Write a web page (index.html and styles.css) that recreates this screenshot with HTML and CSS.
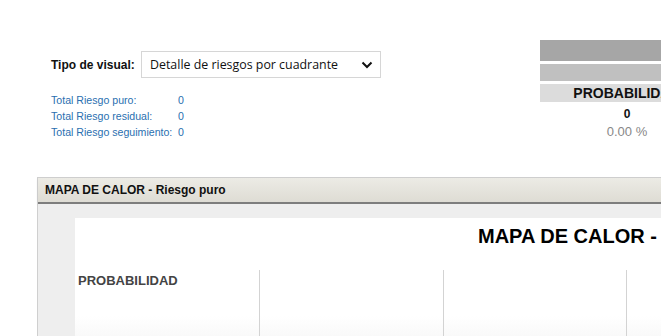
FILE: index.html
```html
<!DOCTYPE html>
<html lang="es">
<head>
<meta charset="UTF-8">
<meta name="viewport" content="width=device-width, initial-scale=1.0">
<title>Mapa de calor</title>
<link rel="stylesheet" href="styles.css">
</head>
<body>
    <div class="top">
        <div class="filters">
            <div class="visual-row">
                <label class="visual-label" for="tipoVisual">Tipo de visual:</label>
                <div class="select">
                    <span>Detalle de riesgos por cuadrante</span>
                    <svg width="12" height="8" viewBox="0 0 12 8"><path d="M1.5 1.5 6 6l4.5-4.5" fill="none" stroke="#111" stroke-width="2"/></svg>
                </div>
            </div>
            <table class="totals">
                <tr><td>Total Riesgo puro:</td><td>0</td></tr>
                <tr><td>Total Riesgo residual:</td><td>0</td></tr>
                <tr><td>Total Riesgo seguimiento:</td><td>0</td></tr>
            </table>
        </div>
        <div class="summary">
            <div class="bar dark"></div>
            <div class="bar light"></div>
            <div class="bar head">PROBABILIDAD</div>
            <div class="count">0</div>
            <div class="percent">0.00 %</div>
        </div>
    </div>

    <div class="panel">
        <div class="panel-title">MAPA DE CALOR - Riesgo puro</div>
        <div class="panel-body">
            <div class="map">
                <h2>MAPA DE CALOR - Riesgo puro</h2>
                <div class="grid">
                    <div class="cell label">PROBABILIDAD</div>
                    <div class="cell"></div>
                    <div class="cell"></div>
                    <div class="cell"></div>
                    <div class="cell"></div>
                </div>
            </div>
        </div>
    </div>
</body>
</html>
```

FILE: styles.css
```css
body {
    margin: 0;
    font-family: "Liberation Sans", Arial, sans-serif;
    background-color: white;
    overflow: hidden;
    width: 661px;
    height: 336px;
}
.top {
    display: flex;
    height: 177px;
}
.filters {
    width: 540px;
    padding: 51px 0 0 51px;
    box-sizing: border-box;
    flex-shrink: 0;
}
.visual-row {
    display: flex;
    align-items: center;
}
.visual-label {
    font-size: 12px;
    font-weight: bold;
    color: #111;
    width: 90px;
}
.select {
    width: 240px;
    height: 27px;
    border: 1px solid #d6d6d6;
    display: flex;
    align-items: center;
    justify-content: space-between;
    padding: 0 7px 0 8px;
    box-sizing: border-box;
    font-family: "Open Sans", "Noto Sans", sans-serif;
    font-size: 12.4px;
    color: #111;
}
.totals {
    margin-top: 14px;
    border-collapse: collapse;
    font-size: 10.6px;
    color: #2a6fb0;
}
.totals td {
    padding: 0;
    height: 16px;
    white-space: nowrap;
}
.totals td:first-child {
    width: 127px;
}
.summary {
    width: 174px;
    flex-shrink: 0;
    padding-top: 40px;
    text-align: center;
}
.bar {
    margin-bottom: 3px;
}
.dark {
    height: 21px;
    background-color: #a6a6a6;
}
.light {
    height: 17px;
    background-color: #c0c0c0;
}
.head {
    height: 18px;
    line-height: 19px;
    background-color: #dcdcdc;
    font-size: 14px;
    font-weight: bold;
    color: #111;
    margin-bottom: 4px;
}
.count {
    font-size: 12px;
    font-weight: bold;
    color: #111;
    line-height: 16px;
}
.percent {
    font-size: 13px;
    color: #888;
    line-height: 20px;
}
.panel {
    margin-left: 37px;
    width: 900px;
    border-left: 1px solid #cfcfcf;
    border-top: 1px solid #cfcfcf;
}
.panel-title {
    height: 24px;
    line-height: 24px;
    padding-left: 7px;
    font-size: 12px;
    font-weight: bold;
    color: #111;
    background: linear-gradient(#ecebe5, #dedcd4);
    border-bottom: 2px solid #7d7d7d;
    box-shadow: 0 1px 2px #c8c8c8;
}
.panel-body {
    background-color: #eeeeee;
    padding: 14px 0 0 37px;
}
.map {
    background-color: white;
    width: 1100px;
    height: 130px;
}
.map h2 {
    margin: 0;
    padding: 8px 0 0 403px;
    font-size: 20px;
    font-weight: bold;
    color: #000;
    line-height: 20px;
}
.grid {
    display: flex;
    margin-top: 24px;
    height: 80px;
    background: linear-gradient(white 46px, #f5f5f5);
}
.cell {
    width: 183.5px;
    box-sizing: border-box;
    border-left: 1px solid #d3d3d3;
    flex-shrink: 0;
}
.cell.label {
    width: 184px;
    border-left: none;
    padding: 3px 0 0 3px;
    font-size: 13px;
    font-weight: bold;
    color: #444;
}
```
